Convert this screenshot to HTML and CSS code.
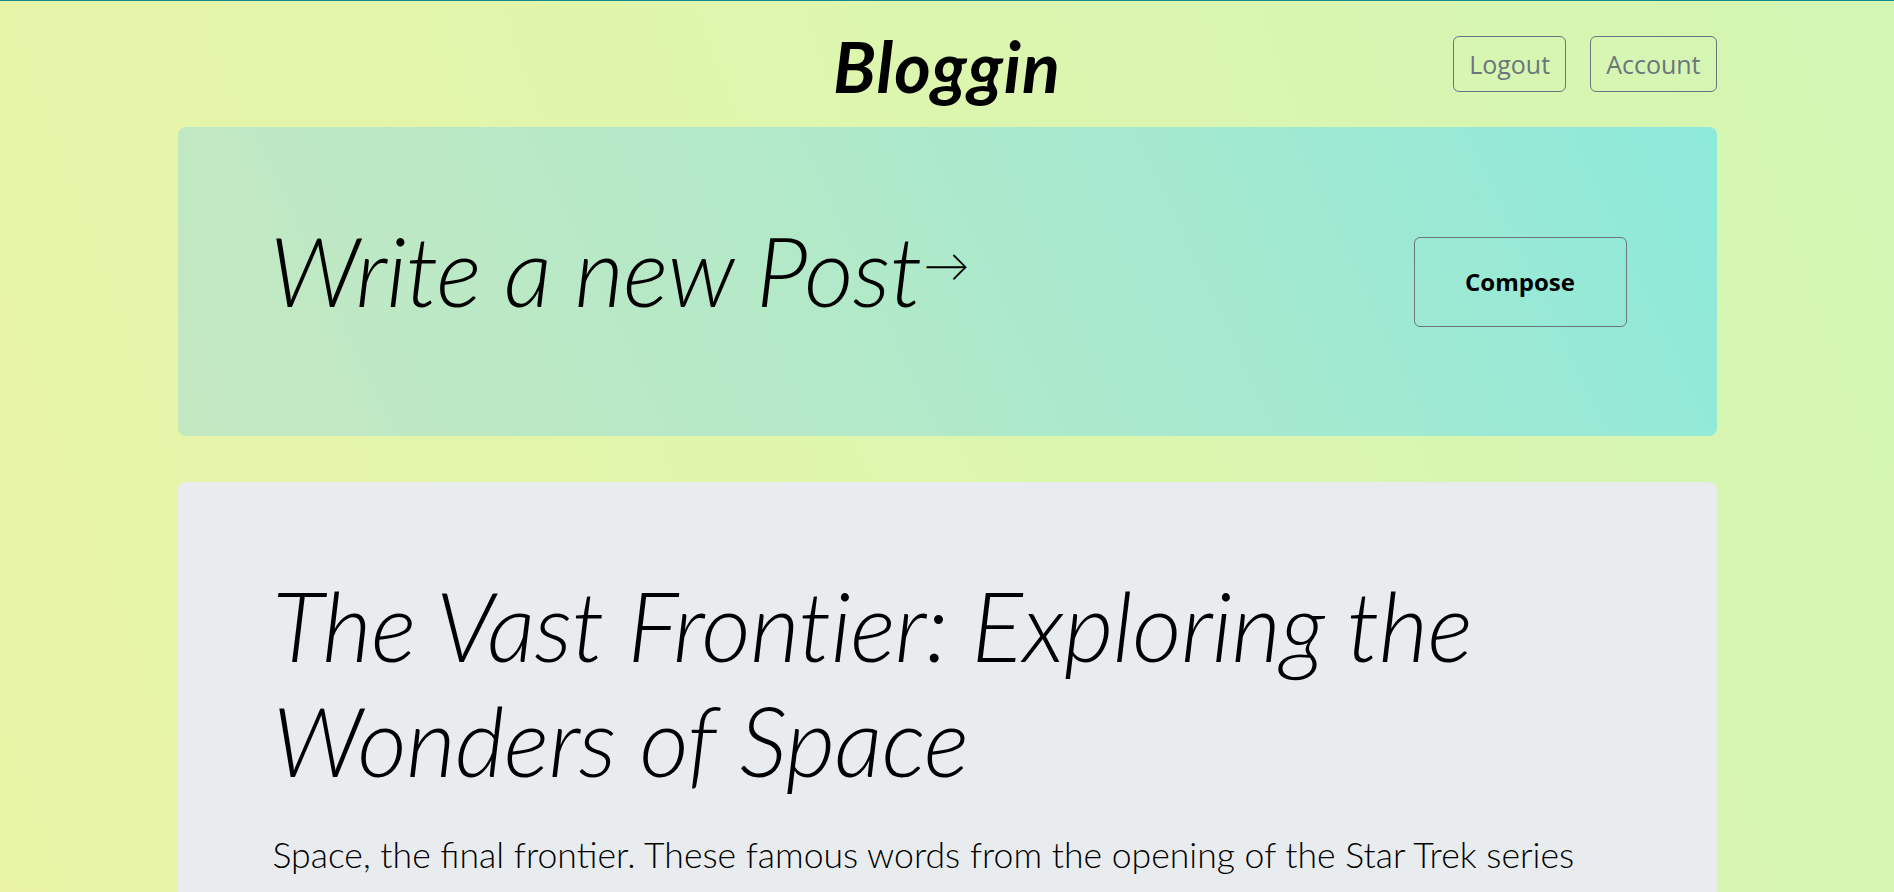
FILE: index.html
```html
<!DOCTYPE html>
<html lang="en">
<head>
<meta charset="utf-8">
<title>Bloggin</title>
<link rel="stylesheet" href="styles.css">
</head>
<body>
<div class="page">
  <header class="site-header">
    <div class="spacer"></div>
    <h1 class="brand">Bloggin</h1>
    <nav class="nav-actions">
      <button class="btn-outline">Logout</button>
      <button class="btn-outline">Account</button>
    </nav>
  </header>

  <section class="compose-card">
    <h2 class="compose-title">Write a new Post<span class="arrow">&rarr;</span></h2>
    <button class="btn-compose">Compose</button>
  </section>

  <article class="post-card">
    <h2 class="post-title">The Vast Frontier: Exploring the Wonders of Space</h2>
    <p class="post-body">Space, the final frontier. These famous words from the opening of the Star Trek series have captured the imagination of generations, inviting us to look up at the night sky and wonder what lies beyond our own small planet.</p>
  </article>
</div>
</body>
</html>
```

FILE: styles.css
```css
html, body {
  margin: 0;
  padding: 0;
}

body {
  min-height: 100vh;
  border-top: 1px solid #178a8c;
  box-sizing: border-box;
  background: linear-gradient(70deg, #e9f4a6 0%, #def6ae 50%, #d3f6b4 100%);
  background-attachment: fixed;
  font-family: "Open Sans", "Segoe UI", sans-serif;
  color: #000;
}

.page {
  width: 1539px;
  margin: 0 auto;
}

.site-header {
  display: grid;
  grid-template-columns: 1fr auto 1fr;
  align-items: center;
  padding-top: 35px;
  height: 56px;
  margin-bottom: 35px;
}

.brand {
  margin: 0;
  font-family: Lato, "Noto Sans", sans-serif;
  font-style: italic;
  font-weight: 700;
  font-size: 70px;
  line-height: 56px;
  letter-spacing: 1px;
  text-align: center;
  position: relative;
  top: 2px;
}

.nav-actions {
  display: flex;
  justify-content: flex-end;
  gap: 24px;
}

.btn-outline {
  height: 56px;
  padding: 0 15px;
  background: transparent;
  border: 1px solid #6c757d;
  border-radius: 6px;
  color: #6c757d;
  font-family: "Open Sans", "Segoe UI", sans-serif;
  font-size: 25px;
  font-weight: 400;
}

.compose-card {
  height: 309px;
  box-sizing: border-box;
  display: flex;
  align-items: center;
  justify-content: space-between;
  padding: 0 90px 0 92px;
  border-radius: 8px;
  background: linear-gradient(65deg, #c4e8c2 0%, #b4e9c8 40%, #9fe9d2 75%, #8de9da 100%);
  margin-bottom: 46px;
}

.compose-title {
  margin: 0 0 24px;
  font-family: Lato, "Noto Sans", sans-serif;
  font-style: italic;
  font-weight: 300;
  font-size: 96px;
  line-height: 1.2;
  letter-spacing: -0.8px;
}

.arrow {
  font-style: normal;
  font-size: 46px;
  letter-spacing: 0;
  vertical-align: 0.55em;
  margin-left: 2px;
}

.btn-compose {
  width: 213px;
  height: 90px;
  background: transparent;
  border: 1px solid #6c757d;
  border-radius: 6px;
  font-family: "Open Sans", "Segoe UI", sans-serif;
  font-weight: 700;
  font-size: 24px;
  color: #000;
}

.post-card {
  background: #e8ecef;
  border-radius: 8px;
  padding: 85px 95px 60px 95px;
}

.post-title {
  margin: 0 0 31px;
  font-family: Lato, "Noto Sans", sans-serif;
  font-style: italic;
  font-weight: 300;
  font-size: 96px;
  line-height: 115px;
  letter-spacing: -0.6px;
}

.post-body {
  margin: 0;
  font-family: Lato, "Segoe UI", sans-serif;
  font-weight: 300;
  font-size: 35.6px;
  line-height: 1.5;
}
```
